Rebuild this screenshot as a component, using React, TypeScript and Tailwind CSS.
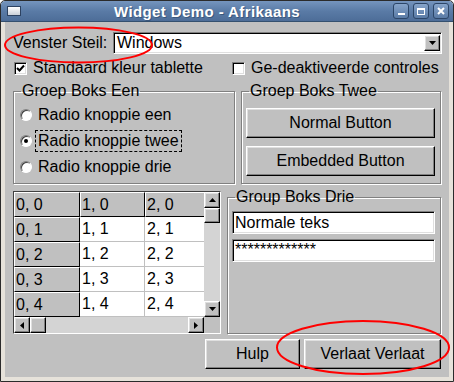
import React from "react";

const raised =
  "border border-t-white border-l-white border-r-black border-b-black bg-[#c0c0c0] shadow-[inset_-1px_-1px_0_#808080,inset_1px_1px_0_#dfdfdf]";
const sunken =
  "border border-t-[#808080] border-l-[#808080] border-r-white border-b-white bg-white shadow-[inset_1px_1px_0_#000,inset_-1px_-1px_0_#dfdfdf]";
const groupBox =
  "border border-[#808080] shadow-[inset_1px_1px_0_#fff,1px_1px_0_#fff] m-0 p-0";
const legend = "ml-[7px] px-[1px] leading-[16px] text-[16px] text-black";

const Arrow = ({ dir }: { dir: "up" | "down" | "left" | "right" }) => {
  const pts = {
    up: "0,4 7,4 3.5,0",
    down: "0,0 7,0 3.5,4",
    left: "4,0 4,7 0,3.5",
    right: "0,0 0,7 4,3.5",
  }[dir];
  const vertical = dir === "up" || dir === "down";
  return (
    <svg width={vertical ? 7 : 4} height={vertical ? 4 : 7} viewBox={vertical ? "0 0 7 4" : "0 0 4 7"}>
      <polygon points={pts} fill="#000" />
    </svg>
  );
};

const ScrollBtn = ({ dir }: { dir: "up" | "down" | "left" | "right" }) => (
  <div className={`${raised} w-[16px] h-[16px] flex items-center justify-center shrink-0`}>
    <Arrow dir={dir} />
  </div>
);

const CheckBox = ({ checked }: { checked?: boolean }) => (
  <div className={`${sunken} w-[13px] h-[13px] shrink-0 flex items-center justify-center`}>
    {checked && (
      <svg width="9" height="9" viewBox="0 0 9 9">
        <path d="M1 4 L3.5 6.5 L8 1.5" stroke="#000" strokeWidth="2" fill="none" />
      </svg>
    )}
  </div>
);

const Radio = ({ label, checked, focus }: { label: string; checked?: boolean; focus?: boolean }) => (
  <div className="h-[26px] flex items-center">
    <div className="w-[12px] h-[12px] rounded-full bg-white border border-t-[#808080] border-l-[#808080] border-r-white border-b-white shadow-[inset_1px_1px_0_#404040] flex items-center justify-center shrink-0">
      {checked && <div className="w-[4px] h-[4px] rounded-full bg-black" />}
    </div>
    <span
      className={`ml-[3px] px-[2px] py-[1px] leading-[18px] border ${
        focus ? "border-dashed border-black" : "border-transparent"
      }`}
    >
      {label}
    </span>
  </div>
);

const rows = [0, 1, 2, 3, 4];

export default function App() {
  return (
    <div className="relative w-[454px] h-[382px] bg-[#e6e2da] border border-[#2b2b2b] rounded-t-[5px] flex flex-col font-['Liberation_Sans',Arial,sans-serif] text-[16px] text-black overflow-hidden">
      {/* title bar */}
      <div className="h-[21px] shrink-0 rounded-t-[4px] bg-gradient-to-b from-[#7595be] via-[#5a7ba6] to-[#4d6d98] border-b border-[#34506f] flex items-center">
        <div className="ml-[6px] w-[14px] h-[10px] border border-[#2d4261] bg-gradient-to-b from-white to-[#c9cfd8] shrink-0" />
        <div className="flex-1 text-center text-white font-bold text-[15px] tracking-[0.4px] leading-none [text-shadow:1px_1px_0_#3b587d]">
          Widget Demo - Afrikaans
        </div>
        <div className="flex gap-[4px] mr-[4px]">
          <div className="w-[16px] h-[16px] rounded-[3px] border border-[#2c4668] bg-gradient-to-b from-[#86a4ca] to-[#5a7ba6] flex items-end justify-center pb-[3px]">
            <div className="w-[7px] h-[2px] bg-white" />
          </div>
          <div className="w-[16px] h-[16px] rounded-[3px] border border-[#2c4668] bg-gradient-to-b from-[#86a4ca] to-[#5a7ba6] flex items-center justify-center">
            <div className="w-[8px] h-[7px] border border-white border-t-2" />
          </div>
          <div className="w-[16px] h-[16px] rounded-[3px] border border-[#2c4668] bg-gradient-to-b from-[#86a4ca] to-[#5a7ba6] flex items-center justify-center">
            <svg width="8" height="8" viewBox="0 0 8 8">
              <path d="M1 1 L7 7 M7 1 L1 7" stroke="#fff" strokeWidth="2" />
            </svg>
          </div>
        </div>
      </div>

      {/* client area */}
      <div className="flex-1 px-[4px] pb-[4px]">
        <div className="h-full bg-[#c0c0c0] flex flex-col pl-[8px] pr-[8px] pt-[10px]">
          {/* style row */}
          <div className="flex items-center h-[22px]">
            <div className="w-[100px] shrink-0 leading-none">Venster Steil:</div>
            <div className={`${sunken} flex-1 h-[22px] -mr-[1px] flex items-center`}>
              <span className="flex-1 pl-[3px] leading-none">Windows</span>
              <div className={`${raised} w-[16px] h-[16px] mr-[1px] flex items-center justify-center`}>
                <Arrow dir="down" />
              </div>
            </div>
          </div>

          {/* checkbox row */}
          <div className="flex items-center h-[20px] mt-[4px] pl-[1px]">
            <div className="w-[218px] flex items-center gap-[6px]">
              <CheckBox checked />
              <span className="leading-none">Standaard kleur tablette</span>
            </div>
            <div className="flex items-center gap-[6px]">
              <CheckBox />
              <span className="leading-none">Ge-deaktiveerde controles</span>
            </div>
          </div>

          {/* group row */}
          <div className="flex gap-[6px] mt-[5px] h-[101px]">
            <fieldset className={`${groupBox} w-[222px]`}>
              <legend className={legend}>Groep Boks Een</legend>
              <div className="pl-[6px] pt-[3px] flex flex-col">
                <Radio label="Radio knoppie een" />
                <Radio label="Radio knoppie twee" checked focus />
                <Radio label="Radio knoppie drie" />
              </div>
            </fieldset>
            <fieldset className={`${groupBox} w-[200px]`}>
              <legend className={legend}>Groep Boks Twee</legend>
              <div className="pl-[4px] pr-[5px] pt-[9px] flex flex-col gap-[8px]">
                <button className={`${raised} h-[30px] leading-none`}>Normal Button</button>
                <button className={`${raised} h-[30px] leading-none`}>Embedded Button</button>
              </div>
            </fieldset>
          </div>

          {/* table row */}
          <div className="flex gap-[6px] mt-[5px] h-[145px]">
            <div className="mt-[2px] w-[208px] h-[143px] border border-t-[#404040] border-l-[#404040] border-r-white border-b-white flex flex-col bg-[#c0c0c0]">
              <div className="flex h-[125px]">
                <div className="w-[190px] overflow-hidden">
                  {rows.map((r) => (
                    <div key={r} className="flex h-[25px]">
                      <div className="w-[66px] shrink-0 border border-t-white border-l-white border-r-black border-b-black bg-[#c0c0c0] pl-[1px] flex items-center leading-none">
                        0, {r}
                      </div>
                      {[1, 2].map((c) =>
                        r === 0 ? (
                          <div
                            key={c}
                            className="w-[65px] shrink-0 border border-t-white border-l-white border-r-black border-b-black bg-[#c0c0c0] pl-[1px] flex items-center leading-none"
                          >
                            {c}, {r}
                          </div>
                        ) : (
                          <div
                            key={c}
                            className="w-[65px] shrink-0 border-r border-b border-[#c0c0c0] bg-white pl-[2px] flex items-center leading-none"
                          >
                            {c}, {r}
                          </div>
                        )
                      )}
                    </div>
                  ))}
                </div>
                <div className="w-[16px] flex flex-col bg-[#d4d4d4]">
                  <ScrollBtn dir="up" />
                  <div className={`${raised} h-[15px] w-[16px]`} />
                  <div className="flex-1" />
                  <ScrollBtn dir="down" />
                </div>
              </div>
              <div className="flex h-[16px]">
                <div className="w-[190px] flex bg-[#d4d4d4]">
                  <ScrollBtn dir="left" />
                  <div className={`${raised} h-[16px] w-[16px]`} />
                  <div className="flex-1" />
                  <ScrollBtn dir="right" />
                </div>
                <div className="w-[16px] bg-[#c0c0c0]" />
              </div>
            </div>

            <fieldset className={`${groupBox} w-[214px]`}>
              <legend className={legend}>Group Boks Drie</legend>
              <div className="pl-[4px] pr-[5px] pt-[6px] flex flex-col gap-[5px]">
                <div className={`${sunken} h-[23px] flex items-center pl-[2px] leading-none`}>Normale teks</div>
                <div className={`${sunken} h-[23px] flex items-start pt-[2px] pl-[2px] leading-none`}>
                  *************
                </div>
              </div>
            </fieldset>
          </div>

          {/* bottom buttons */}
          <div className="flex justify-end gap-[4px] mt-[5px]">
            <button className={`${raised} w-[95px] h-[30px] leading-none`}>Hulp</button>
            <button className={`${raised} w-[137px] h-[30px] leading-none`}>Verlaat Verlaat</button>
          </div>
        </div>
      </div>

      {/* red annotation ellipses */}
      <svg className="absolute left-[-1px] top-[-1px] pointer-events-none" width="454" height="382">
        <ellipse cx="78.5" cy="45" rx="73.5" ry="17.5" fill="none" stroke="#ff0000" strokeWidth="2" />
        <ellipse cx="363" cy="347.5" rx="86" ry="26.5" fill="none" stroke="#ff0000" strokeWidth="2" />
      </svg>
    </div>
  );
}
